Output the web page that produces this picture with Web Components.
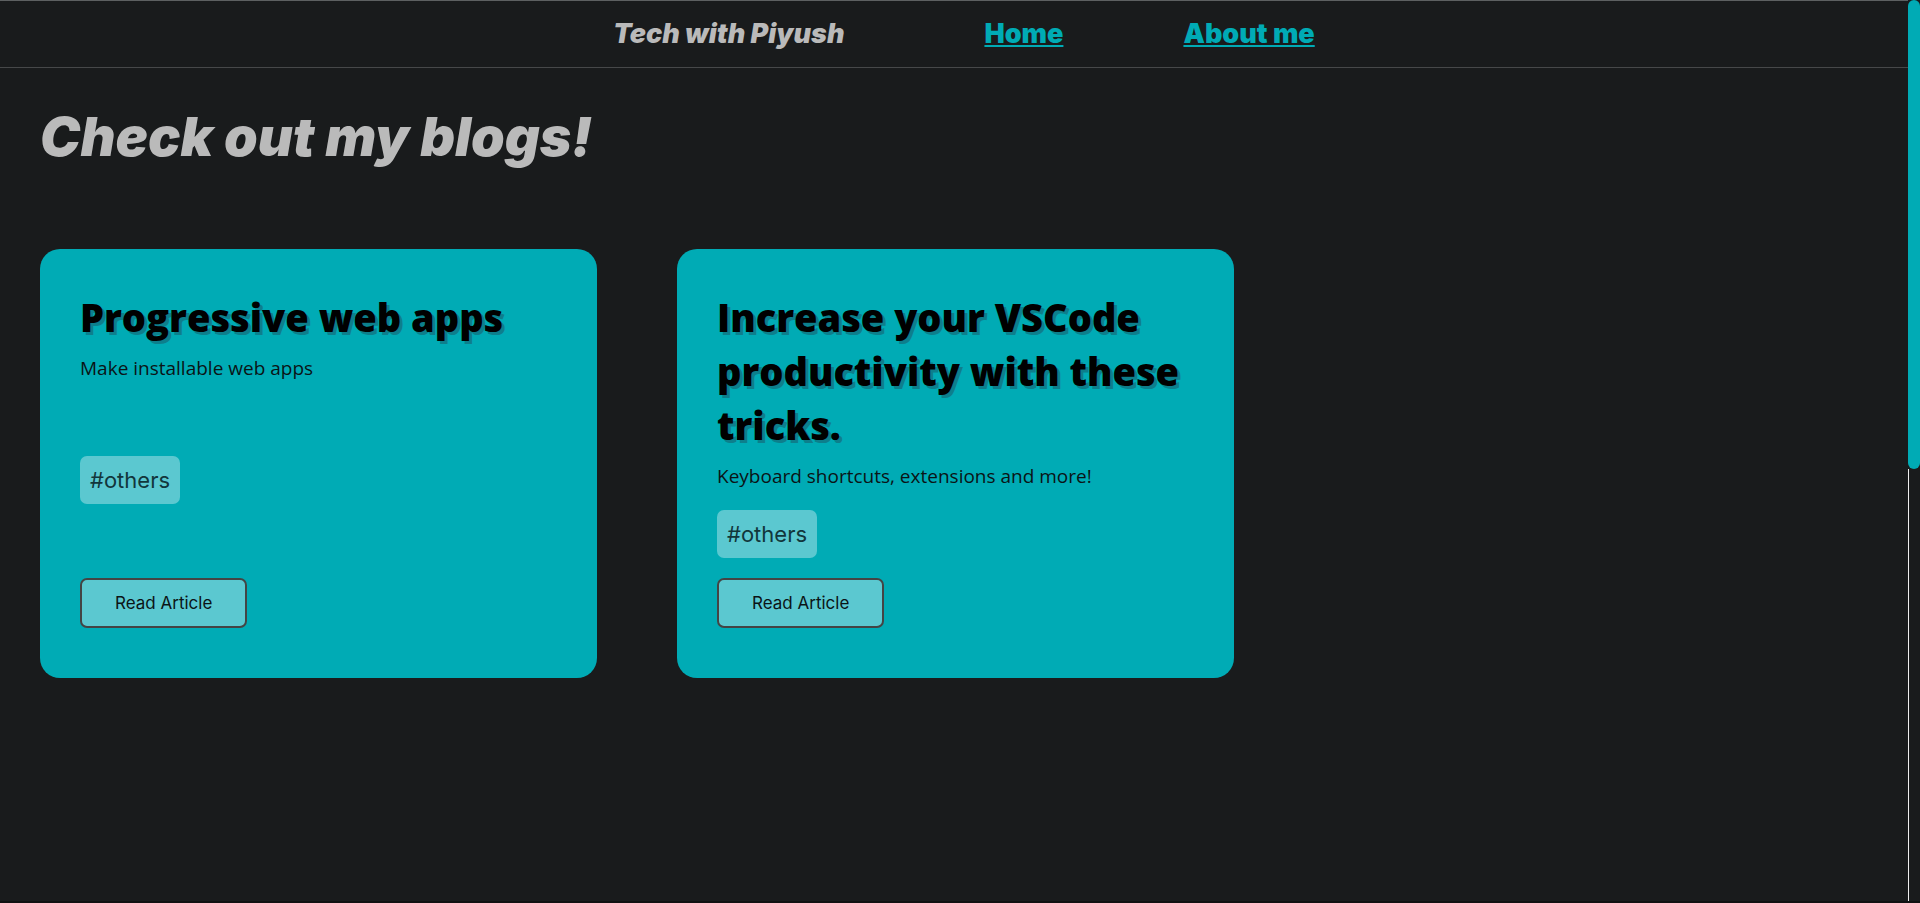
<!DOCTYPE html>
<html lang="en">
<head>
<meta charset="utf-8">
<meta name="viewport" content="width=device-width, initial-scale=1">
<title>Tech with Piyush</title>
<style>
html, body { margin: 0; background: #191b1c; }
body { --teal: #00abb5; --tint: #5bc8d0; --light: #bababa; font-family: Inter, sans-serif; color: #0b1416; }
</style>
</head>
<body>
<blog-page>
  <site-header slot="header" brand="Tech with Piyush">
    <nav-link href="#home">Home</nav-link>
    <nav-link href="#about">About me</nav-link>
  </site-header>
  <page-title>Check out my blogs!</page-title>
  <card-grid>
    <blog-card tag="#others">
      <span slot="title">Progressive web apps</span>
      <span slot="summary">Make installable web apps</span>
    </blog-card>
    <blog-card tag="#others">
      <span slot="title">Increase your VSCode productivity with these tricks.</span>
      <span slot="summary">Keyboard shortcuts, extensions and more!</span>
    </blog-card>
  </card-grid>
</blog-page>
<script>
const define = (name, render) => customElements.define(name, class extends HTMLElement {
  connectedCallback() {
    if (this.shadowRoot) return;
    this.attachShadow({ mode: 'open' }).innerHTML = render(this);
  }
});

define('blog-page', () => `
  <style>
    :host { display: grid; grid-template-columns: minmax(0, 1fr) 12px; min-height: 100vh; box-sizing: border-box; border-bottom: 2px solid #101112; }
    main { display: block; }
  </style>
  <div><slot name="header"></slot><main><slot></slot></main></div>
  <scroll-rail></scroll-rail>`);

define('scroll-rail', () => `
  <style>
    :host { display: grid; grid-template-rows: 52fr 48fr; }
    i { border-radius: 6px; background: var(--teal); }
    b { border-left: 1px solid #eee; }
  </style><i></i><b></b>`);

define('site-header', el => `
  <style>
    :host { display: block; border-top: 1px solid #5d6061; border-bottom: 1px solid #464849; }
    nav { display: flex; flex-wrap: wrap; justify-content: center; align-items: center; gap: 0 120px; min-height: 66px; }
    strong { font: italic 900 27px/32px Inter, sans-serif; color: var(--light); padding: 0 20px; }
  </style>
  <nav><strong>${el.getAttribute('brand')}</strong><slot></slot></nav>`);

define('nav-link', el => `
  <style>
    :host { display: block; }
    a { font: 900 27px/32px Inter, sans-serif; color: var(--teal); text-decoration: underline 2px; text-underline-offset: 2px; text-decoration-skip-ink: none; }
  </style>
  <a href="${el.getAttribute('href')}"><slot></slot></a>`);

define('page-title', () => `
  <style>
    :host { display: block; padding: 41px 40px 84px; }
    h1 { margin: 0; font: italic 900 54px/56px Inter, sans-serif; color: var(--light); }
  </style>
  <h1><slot></slot></h1>`);

define('card-grid', () => `
  <style>
    :host { display: grid; grid-template-columns: repeat(auto-fill, minmax(480px, 1fr)); gap: 80px; padding: 0 37px 40px 40px; }
  </style>
  <slot></slot>`);

define('blog-card', el => `
  <style>
    :host { display: block; }
    article { display: flex; flex-direction: column; justify-content: space-between; align-items: flex-start; gap: 20px; box-sizing: border-box; height: 100%; padding: 41px 40px 50px; border-radius: 20px; background: var(--teal); }
    h2 { margin: 0 0 10px; font: 800 38px/54px "Open Sans", sans-serif; color: #000; text-shadow: 3px 3px 0 #0d7f8c; }
    p { margin: 0; font: 19px/28px "Open Sans", sans-serif; }
    .tag { padding: 10px; border-radius: 7px; background: var(--tint); font-size: 22px; line-height: 28px; color: #12363b; }
    button { padding: 10px 33px; border: 2px solid #444; border-radius: 7px; background: var(--tint); font: 17px/26px Inter, sans-serif; color: #0b1416; }
  </style>
  <article>
    <header><h2><slot name="title"></slot></h2><p><slot name="summary"></slot></p></header>
    <span class="tag">${el.getAttribute('tag')}</span>
    <button type="button">Read Article</button>
  </article>`);
</script>
</body>
</html>
